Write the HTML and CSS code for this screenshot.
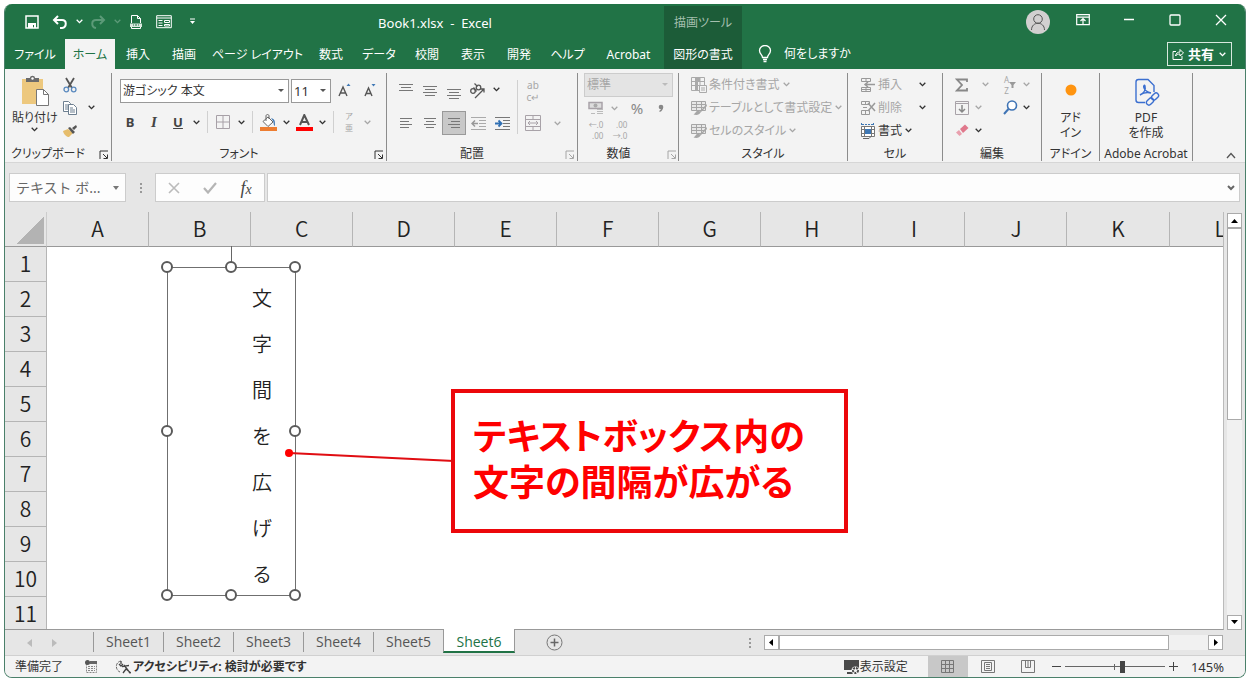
FILE: index.html
```html
<!DOCTYPE html>
<html lang="ja">
<head>
    <meta charset="UTF-8">
    <meta name="viewport" content="width=device-width, initial-scale=1.0">
    <title>Book1.xlsx - Excel</title>
    <link rel="stylesheet" href="styles.css">
</head>
<body>
    <svg class="defs" aria-hidden="true">
        <symbol id="chev" viewBox="0 0 8 8"><path d="M1.5 2.5 4 5l2.500-2.500" fill="none" stroke="currentColor" stroke-width="1.200"/></symbol>
        <symbol id="launch" viewBox="0 0 10 10"><path d="M1 9V1h8M4 4l4 4M8.500 4.500v4h-4" fill="none" stroke="currentColor"/></symbol>
        <symbol id="brushgrid" viewBox="0 0 16 16"><path d="M.5 1.500h14v9h-14zM.5 4.500h14M.5 7.500h14M5.500 1.500v9M10.500 1.500v9" fill="#e8e8e8" stroke="currentColor"/><path d="M15.500 4 9 11.500l-2-1.500c-2 1-2 3-4.500 4.500 3 .8 6 .5 7-2L16 6z" fill="currentColor"/></symbol>
    </svg>

    <div class="window">
        <header class="header">
            <div class="title-left">
                <div class="quick">
                    <button type="button" aria-label="保存"><svg width="14" height="14" viewBox="0 0 14 14"><path d="M1 1h12v12H1z" fill="none" stroke="#fff" stroke-width="1.500"/><path d="M3 8h8v5H9v-3H8v3H3z" fill="#fff"/></svg></button>
                    <button type="button" aria-label="元に戻す"><svg width="16" height="14" viewBox="0 0 16 14"><path d="M6 1 2 5l4 4M2 5h8c5 0 5 7 0 8H8" fill="none" stroke="#fff" stroke-width="2"/></svg></button>
                    <button type="button" class="drop" aria-label="元に戻す一覧"><svg width="9" height="9"><use href="#chev"/></svg></button>
                    <button type="button" class="faded" aria-label="やり直し"><svg width="16" height="14" viewBox="0 0 16 14"><path d="m10 1 4 4-4 4M14 5H6c-5 0-5 7 0 8" fill="none" stroke="currentColor" stroke-width="2"/></svg></button>
                    <button type="button" class="drop faded" aria-label="やり直し一覧"><svg width="9" height="9"><use href="#chev"/></svg></button>
                    <button type="button" aria-label="印刷プレビュー"><svg width="14" height="16" viewBox="0 0 14 16"><path d="M2.500 9V1.500h6l3 3V9M8.500 1.500v3h3M2.500 13v1.500h9V13" fill="none" stroke="#fff"/><path d="M1 9.500h12v3.500H1z" fill="#d8e8de"/><path d="M4 11h1M6 11h2M9 11h1" stroke="#217346"/></svg></button>
                    <button type="button" aria-label="フォーム"><svg width="16" height="14" viewBox="0 0 16 14"><path d="M.7.7h14.600v12H.7zM.7 3h14.600M2.500 5.500h4M2.500 8h4M2.500 10.500h4M8.500 5.500h5v2h-5zM8.500 9.500h5v1.500h-5z" fill="none" stroke="#fff"/></svg></button>
                    <button type="button" aria-label="カスタマイズ"><svg width="7" height="7" viewBox="0 0 7 7"><path d="M1 1h5" stroke="#fff"/><path d="M1 3h5L3.500 6z" fill="#fff"/></svg></button>
                </div>
                <h1 class="book-title">Book1.xlsx&nbsp; -&nbsp; Excel</h1>
            </div>
            <div class="context-title">描画ツール</div>
            <div class="title-right">
                <button type="button" class="avatar" aria-label="アカウント"><svg width="16" height="18" viewBox="0 0 16 18"><circle cx="8" cy="6" r="4.300"/><path d="M1.500 17c0-9 13-9 13 0"/></svg></button>
                <button type="button" class="win-btn" aria-label="リボンの表示オプション"><svg width="14" height="12" viewBox="0 0 14 12"><path d="M.7.7h12.600v10H.7zM.7 3.200h12.600M7 10V5M4.500 7 7 4.500 9.500 7" fill="none" stroke="#fff" stroke-width="1.200"/></svg></button>
                <button type="button" class="win-btn" aria-label="最小化"><svg width="12" height="12"><path d="M1 5.500h10" stroke="#fff" stroke-width="1.300"/></svg></button>
                <button type="button" class="win-btn" aria-label="最大化"><svg width="12" height="12"><rect x="1" y="1" width="10" height="10" rx="1" fill="none" stroke="#fff" stroke-width="1.300"/></svg></button>
                <button type="button" class="win-btn" aria-label="閉じる"><svg width="12" height="12"><path d="m1 1 10 10M11 1 1 11" stroke="#fff" stroke-width="1.300"/></svg></button>
            </div>
            <nav class="tabs">
                <a href="#">ファイル</a>
                <a href="#" class="active">ホーム</a>
                <a href="#">挿入</a>
                <a href="#">描画</a>
                <a href="#">ページ レイアウト</a>
                <a href="#">数式</a>
                <a href="#">データ</a>
                <a href="#">校閲</a>
                <a href="#">表示</a>
                <a href="#">開発</a>
                <a href="#">ヘルプ</a>
                <a href="#">Acrobat</a>
            </nav>
            <a href="#" class="context-tab">図形の書式</a>
            <div class="tabs-right">
                <button type="button" class="tell-me"><svg width="14" height="18" viewBox="0 0 14 18"><path d="M4.500 12.500c0-3-3-3.500-3-7a5.500 5 0 0 1 11 0c0 3.500-3 4-3 7zM5 14.500h4M5.500 16.500h3" fill="none" stroke="#fff" stroke-width="1.300"/></svg>何をしますか</button>
                <button type="button" class="share"><svg width="12" height="12" viewBox="0 0 12 12"><path d="M4 3.500H1v8h9V8M3.500 8C4 5 6 4 8 4V1.500L11.500 5 8 8V6C6 6 4.500 6.500 3.500 8z" fill="none" stroke="#fff"/></svg>共有<svg width="9" height="9"><use href="#chev"/></svg></button>
            </div>
        </header>

        <div class="ribbon">
            <section class="group">
                <div class="body clipboard">
                    <button type="button" class="big paste">
                        <svg width="28" height="32" viewBox="0 0 28 32"><path d="M1 4h21v25H1z" fill="#edc87e"/><path d="M5 3h4c0-3 5-3 5 0h4v4H5z" fill="#6b6b6b"/><circle cx="11.500" cy="3.500" r="1.200" fill="#fff"/><path d="M15.500 14.500h7l5 5v11h-12z" fill="#fff" stroke="#777"/><path d="M22.500 14.500v5h5" fill="none" stroke="#777"/></svg>
                        <span>貼り付け</span>
                        <svg width="9" height="9"><use href="#chev"/></svg>
                    </button>
                    <div class="stack">
                        <button type="button" aria-label="切り取り"><svg width="16" height="16" viewBox="0 0 16 16"><path d="m4 1 6 10M12 1 6 11" stroke="#555" stroke-width="1.800"/><circle cx="4.300" cy="12.500" r="2.300" fill="none" stroke="#5b8abf" stroke-width="1.300"/><circle cx="11.700" cy="12.500" r="2.300" fill="none" stroke="#5b8abf" stroke-width="1.300"/></svg></button>
                        <button type="button" aria-label="コピー"><svg width="16" height="16" viewBox="0 0 16 16"><path d="M1.500 1.500h5l2 2v8h-7zM3 5h4M3 7h4M3 9h4" fill="#fff" stroke="#6d7f90"/><path d="M6.500 4.500h5l3 3v7h-8zM8 8h3M8 10h5M8 12h5" fill="#fff" stroke="#6d7f90"/></svg></button>
                        <button type="button" aria-label="書式のコピー"><svg width="16" height="14" viewBox="0 0 16 14"><path d="m1 7 5-2 5 4-4 4c-2 0-5-2-6-6z" fill="#e6bd6c"/><path d="m6 4 2-1 5 5-2 2zM10 4l4-3 1 2-3 3z" fill="#555"/></svg></button>
                    </div>
                    <button type="button" class="drop" aria-label="コピーのオプション"><svg width="9" height="9"><use href="#chev"/></svg></button>
                </div>
                <footer class="has-launcher"><h2>クリップボード</h2><button type="button" class="launcher" aria-label="クリップボードの詳細"><svg width="10" height="10"><use href="#launch"/></svg></button></footer>
            </section>

            <section class="group">
                <div class="body font">
                    <div class="row">
                        <span class="combo font-name"><select aria-label="フォント名"><option>游ゴシック 本文</option></select></span>
                        <span class="combo font-size"><select aria-label="フォント サイズ"><option>11</option></select></span>
                        <button type="button" class="tool" aria-label="拡大"><svg width="16" height="16" viewBox="0 0 16 16"><path d="m2 13 4-9 4 9M3.500 10h5" fill="none" stroke="#555" stroke-width="1.400"/><path d="m9.500 3 2-2.500 2 2.500z" fill="#3f78b5"/></svg></button>
                        <button type="button" class="tool" aria-label="縮小"><svg width="16" height="16" viewBox="0 0 16 16"><path d="m2 13 3.500-8L9 13M3.500 10.500h4" fill="none" stroke="#555" stroke-width="1.400"/><path d="m8.500 1 2 2.500 2-2.500z" fill="#3f78b5"/></svg></button>
                    </div>
                    <div class="row">
                        <button type="button" class="tool bold">B</button>
                        <button type="button" class="tool italic">I</button>
                        <button type="button" class="tool underline">U</button>
                        <button type="button" class="drop" aria-label="下線"><svg width="9" height="9"><use href="#chev"/></svg></button>
                        <span class="sep"></span>
                        <button type="button" class="tool" aria-label="罫線"><svg width="14" height="14"><path d="M.5.5h13v13H.5zM7 .5v13M.5 7h13" fill="none" stroke="#a7a0a7"/></svg></button>
                        <button type="button" class="drop" aria-label="罫線の種類"><svg width="9" height="9"><use href="#chev"/></svg></button>
                        <span class="sep"></span>
                        <button type="button" class="tool" aria-label="塗りつぶしの色"><svg width="17" height="17" viewBox="0 0 17 17"><path d="M3 7.500 8 3l5 5-5 4.500z" fill="#fff" stroke="#666"/><path d="M6 7V2c0-2 3-2 3 0v3" fill="none" stroke="#666"/><path d="M11 4c4 1 4 3 4 8-2-1-1-4-2-5z" fill="#3f78b5"/><path d="M0 13h17v4H0z" fill="#ed7d31"/></svg></button>
                        <button type="button" class="drop" aria-label="塗りつぶしの一覧"><svg width="9" height="9"><use href="#chev"/></svg></button>
                        <button type="button" class="tool" aria-label="フォントの色"><svg width="17" height="17" viewBox="0 0 17 17"><path d="m4 11 4.300-10L13 11M5.500 8h6" fill="none" stroke="#555" stroke-width="2"/><path d="M0 13h17v4H0z" fill="#f00"/></svg></button>
                        <button type="button" class="drop" aria-label="フォントの色の一覧"><svg width="9" height="9"><use href="#chev"/></svg></button>
                        <span class="sep"></span>
                        <button type="button" class="tool ruby" disabled><span>ア</span><span>亜</span></button>
                        <button type="button" class="drop" disabled aria-label="ふりがな"><svg width="9" height="9"><use href="#chev"/></svg></button>
                    </div>
                </div>
                <footer class="has-launcher"><h2>フォント</h2><button type="button" class="launcher" aria-label="フォントの詳細"><svg width="10" height="10"><use href="#launch"/></svg></button></footer>
            </section>

            <section class="group">
                <div class="body align">
                    <div class="align-grid">
                        <button type="button" class="tool" aria-label="上揃え"><svg width="14" height="16"><path d="M0 1.500h14M2 4.500h10M0 7.500h14" stroke="#777"/></svg></button>
                        <button type="button" class="tool" aria-label="上下中央揃え"><svg width="14" height="16"><path d="M0 4.500h14M2 7.500h10M0 10.500h14M2 13.500h10" transform="translate(0 -1)" stroke="#777"/></svg></button>
                        <button type="button" class="tool" aria-label="下揃え"><svg width="14" height="16"><path d="M0 6.500h14M2 9.500h10M0 12.500h14M2 15.500h10" stroke="#777"/></svg></button>
                        <button type="button" class="tool" aria-label="方向"><svg width="18" height="18" viewBox="0 0 18 18"><g fill="none" stroke="#555" stroke-width="1.300"><circle cx="4" cy="9" r="2.300"/><path d="m4.500 5.500 3 4"/><circle cx="9.500" cy="5.500" r="2.300"/><path d="m5.500 1.500 3 3M6 16l9-9M11.500 7H15v3.500"/></g></svg></button>
                        <button type="button" class="drop" aria-label="方向の一覧"><svg width="9" height="9"><use href="#chev"/></svg></button>
                        <button type="button" class="tool" aria-label="左揃え"><svg width="12" height="12"><path d="M0 1.500h12M0 4.500h9M0 7.500h12M0 10.500h9" stroke="#777"/></svg></button>
                        <button type="button" class="tool" aria-label="中央揃え"><svg width="12" height="12"><path d="M0 1.500h12M2 4.500h8M0 7.500h12M2 10.500h8" stroke="#777"/></svg></button>
                        <button type="button" class="tool on" aria-label="右揃え"><svg width="12" height="12"><path d="M0 1.500h12M3 4.500h9M0 7.500h12M3 10.500h9" stroke="#777"/></svg></button>
                        <button type="button" class="tool" aria-label="インデントを減らす"><svg width="15" height="14"><path d="M0 1.500h15M8 4.500h7M8 7.500h7M8 10.500h7M0 13.500h15" stroke="#aaa"/><path d="M7 7.500H1M4 4.500l-3 3 3 3" fill="none" stroke="#999" stroke-width="1.500"/></svg></button>
                        <button type="button" class="tool" aria-label="インデントを増やす"><svg width="15" height="14"><path d="M0 1.500h15M8 4.500h7M8 7.500h7M8 10.500h7M0 13.500h15" stroke="#777"/><path d="M0 7.500h6M3.500 4.500l3 3-3 3" fill="none" stroke="#2f6fb3" stroke-width="1.800"/></svg></button>
                    </div>
                    <span class="sep tall"></span>
                    <div class="align-side">
                        <button type="button" class="tool wrap" disabled>ab<br>c↵</button>
                        <div class="row">
                            <button type="button" class="tool" disabled aria-label="セルを結合"><svg width="16" height="16"><path d="M.5.5h15v15H.5zM.5 4.500h15M.5 11.500h15M8 .5v4M8 11.500v4M3 8h10M5 6 3 8l2 2M11 6l2 2-2 2" fill="none" stroke="#a8a2a8"/></svg></button>
                            <button type="button" class="drop" disabled aria-label="結合の一覧"><svg width="9" height="9"><use href="#chev"/></svg></button>
                        </div>
                    </div>
                </div>
                <footer class="has-launcher"><h2>配置</h2><button type="button" class="launcher" disabled aria-label="配置の詳細"><svg width="10" height="10"><use href="#launch"/></svg></button></footer>
            </section>

            <section class="group">
                <div class="body number">
                    <span class="combo off"><select aria-label="表示形式" disabled><option>標準</option></select></span>
                    <div class="row">
                        <button type="button" class="tool" disabled aria-label="通貨"><svg width="16" height="15" viewBox="0 0 16 15"><path d="M1 1.500h13v6H1z" fill="#ddd" stroke="#a8a2a8" stroke-width="1.500"/><circle cx="7.500" cy="4.500" r="2" fill="#aaa"/><path d="M9 8.500h6M9 10.500h6M9 12.500h6M3 12.500h4" stroke="#bbb"/></svg></button>
                        <button type="button" class="drop" disabled aria-label="通貨の一覧"><svg width="9" height="9"><use href="#chev"/></svg></button>
                        <button type="button" class="tool percent" disabled>%</button>
                        <button type="button" class="tool comma" disabled aria-label="桁区切り"><svg width="6" height="9"><circle cx="3" cy="3" r="2.300" fill="#888"/><path d="M4.500 3c0 2-1 3.500-3 4.500" fill="none" stroke="#888" stroke-width="1.300"/></svg></button>
                    </div>
                    <div class="row">
                        <button type="button" class="tool digits" disabled>←.0<br>.00</button>
                        <button type="button" class="tool digits" disabled>.00<br>→.0</button>
                    </div>
                </div>
                <footer class="has-launcher"><h2>数値</h2><button type="button" class="launcher" disabled aria-label="数値の詳細"><svg width="10" height="10"><use href="#launch"/></svg></button></footer>
            </section>

            <section class="group">
                <div class="body lines">
                    <button type="button" class="line" disabled><svg width="16" height="16"><path d="M.5.5h13v13H.5zM.5 4.500h13M.5 8.500h13M4.500.5v13M9 .5v13" fill="none" stroke="#aaa"/><path d="M5 1h4v3H5zM5 5h2v8H5z" fill="#aaa"/><path d="M8.500 8.500h7v7h-7zM10 11h4M10 13h4" fill="#f3f3f3" stroke="#aaa"/></svg>条件付き書式<svg width="9" height="9"><use href="#chev"/></svg></button>
                    <button type="button" class="line" disabled><svg width="16" height="16"><use href="#brushgrid"/></svg>テーブルとして書式設定<svg width="9" height="9"><use href="#chev"/></svg></button>
                    <button type="button" class="line" disabled><svg width="16" height="16"><use href="#brushgrid"/></svg>セルのスタイル<svg width="9" height="9"><use href="#chev"/></svg></button>
                </div>
                <footer><h2>スタイル</h2></footer>
            </section>

            <section class="group">
                <div class="body lines">
                    <div class="row">
                        <button type="button" class="line" disabled><svg width="16" height="16"><path d="M1.500 1.500h9v3h-9zM6 1.500v3M1.500 10.500h9v4h-9zM6 10.500v4M1.500 12.500h9" fill="none" stroke="#999"/><path d="M15 7.500H5M8 5 5 7.500 8 10" fill="none" stroke="#999" stroke-width="1.500"/></svg>挿入</button>
                        <button type="button" class="drop far" aria-label="挿入の一覧"><svg width="9" height="9"><use href="#chev"/></svg></button>
                    </div>
                    <div class="row">
                        <button type="button" class="line" disabled><svg width="16" height="16"><path d="M1.500 1.500h8v3h-8zM5.500 1.500v3M1.500 10.500h8v4h-8zM5.500 10.500v4M3 7.500h4" fill="none" stroke="#999"/><path d="m8 3 7 8M15 3l-7 8" stroke="#999" stroke-width="1.500"/></svg>削除</button>
                        <button type="button" class="drop far" aria-label="削除の一覧"><svg width="9" height="9"><use href="#chev"/></svg></button>
                    </div>
                    <button type="button" class="line"><svg width="16" height="16"><path d="M1.500 0v3M13.500 0v3M2 1.500h12" stroke="#3f78b5" stroke-dasharray="2 1"/><path d="M1.500 3.500h13v10h-13zM1.500 6.500h13M1.500 10.500h13M4.500 3.500v10M11.500 3.500v10" fill="#fff" stroke="#777"/><path d="M5 6h6v5H5z" fill="#3f78b5"/><path d="M3 15.500h6l2-2" fill="none" stroke="#666"/></svg>書式<svg width="9" height="9"><use href="#chev"/></svg></button>
                </div>
                <footer><h2>セル</h2></footer>
            </section>

            <section class="group">
                <div class="body edit">
                    <div class="pair"><button type="button" class="tool" disabled aria-label="合計"><svg width="14" height="14"><path d="M12 4V1.500H2L7 7l-5 5.500h10V10" fill="none" stroke="#888" stroke-width="1.800"/></svg></button><button type="button" class="drop far-sum" disabled aria-label="合計の一覧"><svg width="9" height="9"><use href="#chev"/></svg></button></div>
                    <div class="pair"><button type="button" class="tool sort" disabled><span>A<br>Z</span><svg width="7" height="8"><path d="M0 1h7L4.500 4v3h-2V4z" fill="#999"/></svg></button><button type="button" class="drop" disabled aria-label="並べ替えの一覧"><svg width="9" height="9"><use href="#chev"/></svg></button></div>
                    <div class="pair"><button type="button" class="tool" disabled aria-label="フィル"><svg width="14" height="14"><path d="M.5.5h13v13H.5zM.5 2.500h13" fill="none" stroke="#a8a2a8"/><path d="M7 4v7M4 8l3 3 3-3" fill="none" stroke="#888" stroke-width="1.500"/></svg></button><button type="button" class="drop" disabled aria-label="フィルの一覧"><svg width="9" height="9"><use href="#chev"/></svg></button></div>
                    <div class="pair"><button type="button" class="tool" aria-label="検索と選択"><svg width="15" height="15"><circle cx="9" cy="5.500" r="4.500" fill="#fff" stroke="#3f74b5" stroke-width="1.600"/><path d="M5.500 9 1 14" stroke="#3f74b5" stroke-width="2"/></svg></button><button type="button" class="drop" aria-label="検索の一覧"><svg width="9" height="9"><use href="#chev"/></svg></button></div>
                    <div class="pair"><button type="button" class="tool" aria-label="クリア"><svg width="14" height="13"><path d="m5 5 5-4.500L13.500 4 8 9z" fill="#e0788c"/><path d="m4 6 3 4-2.500 2L1 8.500z" fill="#e9a0ae"/></svg></button><button type="button" class="drop" aria-label="クリアの一覧"><svg width="9" height="9"><use href="#chev"/></svg></button></div>
                </div>
                <footer><h2>編集</h2></footer>
            </section>

            <section class="group">
                <div class="body center">
                    <button type="button" class="big"><svg width="28" height="32"><circle cx="14" cy="15" r="5.500" fill="#ff9410"/></svg><span>アド<br>イン</span></button>
                </div>
                <footer><h2>アドイン</h2></footer>
            </section>

            <section class="group">
                <div class="body center">
                    <button type="button" class="big"><svg class="pdf" width="28" height="32" viewBox="0 0 28 32"><path d="M13 27.500H6.500c-2 0-2.500-1-2.500-2.500V7c0-2 1-2.500 2.500-2.500H16l6 6V17M8 20c4-2 6-5 5-9-.5-2-2 0-1 2 1 3 3 4 7 5-4-1-8 0-11 2z"/><rect x="19" y="19" width="8" height="5" rx="2.500" transform="rotate(-45 23 21.500)"/><rect x="14" y="24" width="8" height="5" rx="2.500" transform="rotate(-45 18 26.500)"/></svg><span>PDF<br>を作成</span></button>
                </div>
                <footer><h2>Adobe Acrobat</h2></footer>
            </section>
            <button type="button" class="collapse" aria-label="リボンを折りたたむ"><svg width="10" height="7"><path d="m1 6 4-4.500L9 6" fill="none" stroke="#555" stroke-width="1.300"/></svg></button>
        </div>

        <div class="formula-bar">
            <button type="button" class="name-box">テキスト ボ...<i class="tri"></i></button>
            <span class="dots"><i></i><i></i><i></i></span>
            <div class="fx-box">
                <button type="button" aria-label="キャンセル"><svg width="12" height="12"><path d="m1 1 10 10M11 1 1 11" stroke="#bbb" stroke-width="1.600"/></svg></button>
                <button type="button" aria-label="入力"><svg width="14" height="12"><path d="m1 6 4 4.500L13 1" fill="none" stroke="#b5b5b5" stroke-width="2.200"/></svg></button>
                <button type="button" class="fx">f<small>x</small></button>
            </div>
            <div class="formula">
                <input type="text" aria-label="数式バー">
                <svg width="12" height="12"><path d="m3 4 3 3 3-3" fill="none" stroke="#666" stroke-width="2"/></svg>
            </div>
        </div>

        <main class="workspace">
            <div class="sheet">
                <table>
                    <thead>
                        <tr><th class="corner"></th><th>A</th><th>B</th><th>C</th><th>D</th><th>E</th><th>F</th><th>G</th><th>H</th><th>I</th><th>J</th><th>K</th><th>L</th></tr>
                    </thead>
                    <tbody>
                        <tr><th>1</th><td colspan="12"></td></tr>
                        <tr><th>2</th><td colspan="12"></td></tr>
                        <tr><th>3</th><td colspan="12"></td></tr>
                        <tr><th>4</th><td colspan="12"></td></tr>
                        <tr><th>5</th><td colspan="12"></td></tr>
                        <tr><th>6</th><td colspan="12"></td></tr>
                        <tr><th>7</th><td colspan="12"></td></tr>
                        <tr><th>8</th><td colspan="12"></td></tr>
                        <tr><th>9</th><td colspan="12"></td></tr>
                        <tr><th>10</th><td colspan="12"></td></tr>
                        <tr><th>11</th><td colspan="12"></td></tr>
                    </tbody>
                </table>
                <!-- drawing layer: vertical text box, leader line, callout -->
                <div class="text-box">
                    <svg class="handles" width="140" height="360" viewBox="0 0 140 360">
                        <path d="M70.500 0v20" stroke="#666"/>
                        <rect x="6.500" y="21.500" width="128" height="328" fill="none" stroke="#bbb"/>
                        <rect x="6.500" y="21.500" width="128" height="328" fill="none" stroke="#222" stroke-dasharray="1 1"/>
                        <g fill="#fff" stroke="#5a5a5a" stroke-width="2">
                            <circle cx="6" cy="21" r="5"/><circle cx="70" cy="21" r="5"/><circle cx="134" cy="21" r="5"/>
                            <circle cx="6" cy="185" r="5"/><circle cx="134" cy="185" r="5"/>
                            <circle cx="6" cy="349" r="5"/><circle cx="70" cy="349" r="5"/><circle cx="134" cy="349" r="5"/>
                        </g>
                    </svg>
                    <p>文字間を広げる</p>
                </div>
                <div class="callout">テキストボックス内の<br>文字の間隔が広がる</div>
                <svg class="leader" width="176" height="20"><path d="M5 7 170 15" stroke="#e00d12" stroke-width="2"/><circle cx="5" cy="7" r="4" fill="#f00"/></svg>
            </div>
            <div class="vscroll">
                <button type="button" aria-label="上へ"><svg width="9" height="5"><path d="M1 5h7L4.500 1z"/></svg></button>
                <span class="thumb"></span>
                <button type="button" class="end" aria-label="下へ"><svg width="9" height="5"><path d="M1 0h7L4.500 4z"/></svg></button>
            </div>
        </main>

        <div class="sheet-bar">
            <div class="sheet-nav">
                <button type="button" aria-label="前へ"><svg width="5" height="8"><path d="M5 0v8L0 4z" fill="#bbb"/></svg></button>
                <button type="button" aria-label="次へ"><svg width="5" height="8"><path d="M0 0v8l5-4z" fill="#bbb"/></svg></button>
            </div>
            <nav class="sheet-tabs">
                <a href="#">Sheet1</a><a href="#">Sheet2</a><a href="#">Sheet3</a><a href="#">Sheet4</a><a href="#">Sheet5</a><a href="#" class="active">Sheet6</a>
            </nav>
            <button type="button" class="add-sheet" aria-label="新しいシート"><svg width="17" height="17"><circle cx="8.500" cy="8.500" r="7.500" fill="none" stroke="#777"/><path d="M8.500 4.500v8M4.500 8.500h8" stroke="#666" stroke-width="1.500"/></svg></button>
            <span class="dots"><i></i><i></i><i></i></span>
            <div class="hscroll">
                <button type="button" aria-label="左へ"><svg width="5" height="9"><path d="M4 1v7L0 4.500z"/></svg></button>
                <span class="thumb"></span>
                <button type="button" class="end" aria-label="右へ"><svg width="5" height="9"><path d="M1 1v7l4-3.500z"/></svg></button>
            </div>
        </div>

        <footer class="status">
            <span class="ready">準備完了</span>
            <button type="button" class="macro" aria-label="マクロの記録"><svg width="12" height="13"><path d="M1.500 3.500h10v9h-10zM3 6.500h7M3 8.500h7M3 10.500h7" fill="none" stroke="#888" stroke-dasharray="2 1"/><path d="M5 1h7v3H5z" fill="#666"/><circle cx="2.500" cy="2.500" r="2.500" fill="#555"/></svg></button>
            <button type="button" class="access"><svg width="16" height="14" viewBox="0 0 16 14"><path d="M6 1C0 2 0 10 5 12" fill="none" stroke="#666" stroke-dasharray="3 1"/><path d="M6 1v3M4 4l2 2 2-2M7 6.500c4 0 4-1 7-1M8 13l3-4 5 4M9 5l6 8" fill="none" stroke="#444" stroke-width="1.300"/></svg>アクセシビリティ: 検討が必要です</button>
            <button type="button" class="display"><svg width="16" height="16"><path d="M0 1h15v10H0zM3 13h6v2H3z" fill="#4a4a4a"/><circle cx="11.500" cy="11.500" r="4" fill="#f3f3f3"/><circle cx="11.500" cy="11.500" r="2.500" fill="none" stroke="#4a4a4a" stroke-width="2" stroke-dasharray="2 1"/></svg>表示設定</button>
            <div class="views">
                <button type="button" class="on" aria-label="標準"><svg width="13" height="13"><path d="M.5.5h12v12H.5zM4.500.5v12M8.500.5v12M.5 4.500h12M.5 8.500h12" fill="none" stroke="#777"/></svg></button>
                <button type="button" aria-label="ページ レイアウト表示"><svg width="14" height="13"><path d="M.5.500h13v12H.5zM3.500 2.500h7v8h-7zM5 4.500h4M5 6.500h4M5 8.500h4" fill="none" stroke="#777"/></svg></button>
                <button type="button" aria-label="改ページ プレビュー"><svg width="14" height="13"><path d="M.5.500h13v12H.5zM4.500.5v7h5v-7M7 .5v7" fill="none" stroke="#777"/></svg></button>
            </div>
            <div class="zoom">
                <button type="button" aria-label="縮小"><svg width="9" height="9"><path d="M0 4.500h9" stroke="#444"/></svg></button>
                <input type="range" min="0" max="100" value="58" aria-label="ズーム">
                <button type="button" aria-label="拡大"><svg width="9" height="9"><path d="M0 4.500h9M4.500 0v9" stroke="#444"/></svg></button>
                <output>145%</output>
            </div>
        </footer>
    </div>
</body>
</html>
```
FILE: styles.css
```css
* {
    margin: 0;
    padding: 0;
    box-sizing: border-box;
}

body {
    font-family: "Noto Sans", "Noto Sans CJK JP", sans-serif;
    font-size: 12px;
    line-height: 16px;
    font-feature-settings: "palt";
    color: #333;
    background-color: #fff;
}

button, input, select {
    font: inherit;
    font-feature-settings: inherit;
    color: inherit;
    background: none;
    border: none;
}

button {
    display: flex;
    align-items: center;
    justify-content: center;
    white-space: nowrap;
}

button:disabled, select:disabled {
    color: #a6a6a6;
    opacity: 1;
}

a {
    color: inherit;
    text-decoration: none;
}

svg {
    display: block;
    flex: none;
}

.defs {
    position: absolute;
    width: 0;
    height: 0;
}

.window {
    display: flex;
    flex-direction: column;
    height: calc(100vh - 9px);
    margin: 4px 4px 5px;
    border: 1px solid #4a806a;
    border-top: none;
    border-radius: 8px;
    background-color: #e6e6e6;
    overflow: hidden;
}

/* title bar and ribbon tabs */
.header {
    display: grid;
    grid-template-columns: auto 78px 1fr;
    grid-template-rows: 35px 30px;
    background-color: #217346;
    color: #fff;
}

.title-left {
    display: flex;
    align-items: center;
}

.quick {
    display: flex;
    align-items: center;
    padding-left: 13px;
}

.quick button {
    width: 28px;
    height: 28px;
}

.quick .drop {
    width: 10px;
}

.faded {
    color: #5c9a78;
}

.book-title {
    flex: 1;
    font-size: 13px;
    font-weight: normal;
    text-align: center;
    padding-top: 3px;
}

.context-title, .context-tab {
    display: flex;
    align-items: center;
    justify-content: center;
    background-color: #1c5c38;
}

.context-title {
    color: #a4bfae;
    margin-top: 2px;
}

.title-right {
    display: flex;
    justify-content: flex-end;
    align-items: center;
    padding-right: 1px;
}

.avatar {
    width: 24px;
    height: 24px;
    margin-right: 10px;
    border-radius: 50%;
    background-color: #d2d0d0;
}

.avatar svg {
    fill: none;
    stroke: #555;
}

.win-btn {
    width: 46px;
    height: 34px;
    padding-bottom: 3px;
}

.tabs {
    display: grid;
    grid-template-columns: 60px 50px 46px 46px 101px 46px 50px 46px 46px 46px 51px 71px;
}

.tabs a, .context-tab {
    display: flex;
    align-items: center;
    justify-content: center;
    padding-top: 2px;
    white-space: nowrap;
}

.tabs .active {
    background-color: #f3f3f3;
    color: #217346;
}

.tabs-right {
    display: flex;
    justify-content: space-between;
    align-items: center;
    padding: 0 13px 0 16px;
}

.tell-me {
    gap: 12px;
}

.share {
    gap: 4px;
    height: 24px;
    padding: 0 4px;
    border: 1px solid #d8e8de;
    font-size: 13px;
    font-weight: bold;
}

/* ribbon */
.ribbon {
    display: grid;
    grid-template-columns: 107px 275px 191px 101px 169px 95px 99px 58px 93px 1fr;
    height: 94px;
    padding: 4px 0 1px;
    background-color: #f3f3f3;
    border-bottom: 1px solid #d6d6d6;
}

.group {
    display: grid;
    grid-template-rows: 1fr 14px;
    border-right: 1px solid #8c8c8c;
    min-width: 0;
}

.group footer {
    display: flex;
    align-items: center;
    justify-content: center;
    position: relative;
}

.group .has-launcher {
    padding-right: 20px;
}

.group h2 {
    font-size: 12px;
    font-weight: normal;
    line-height: 14px;
    white-space: nowrap;
}

.launcher {
    position: absolute;
    right: 2px;
    top: 3px;
}

.row {
    display: flex;
    align-items: center;
}

.tool {
    width: 24px;
    height: 24px;
}

.drop {
    width: 12px;
    height: 20px;
}

.sep {
    width: 1px;
    height: 22px;
    margin: 0 3px 0 5px;
    background-color: #d0d0d0;
}

.clipboard {
    display: flex;
    padding-left: 7px;
}

.big {
    flex-direction: column;
    justify-content: flex-start;
    align-self: start;
    line-height: 15px;
    padding-top: 2px;
}

.big span {
    padding-top: 3px;
}

.stack {
    display: flex;
    flex-direction: column;
    width: 24px;
}

.stack button {
    height: 23px;
}

.clipboard .drop {
    height: 69px;
    margin-left: 4px;
}

.font {
    display: flex;
    flex-direction: column;
    gap: 7px;
    padding: 6px 0 0 6px;
}

.font .row:first-child {
    padding-left: 2px;
    gap: 2px;
}

.combo {
    position: relative;
    display: block;
    border: 1px solid #999;
    background-color: #fff;
}

.combo::after {
    content: "";
    position: absolute;
    right: 4px;
    top: 9px;
    border: 3px solid transparent;
    border-top-color: #555;
    border-bottom: none;
}

.combo select {
    display: block;
    width: 100%;
    height: 22px;
    padding-left: 2px;
    appearance: none;
}

.font-name {
    width: 169px;
}

.font-size {
    width: 40px;
}

.font-size select {
    font-size: 13px;
}

.combo.off {
    border-color: #ccc;
    background-color: #e4e4e4;
}

.combo.off::after {
    border-top-color: #bbb;
}

.bold, .italic, .underline {
    font-size: 13px;
    font-weight: bold;
    color: #444;
}

.italic {
    font-family: "Liberation Serif", serif;
    font-style: italic;
    font-size: 15px;
}

.underline {
    text-decoration: underline;
}

.ruby {
    flex-direction: column;
    font-size: 8px;
    line-height: 12px;
}

.align {
    display: flex;
    padding: 6px 0 0 7px;
}

.align-grid {
    display: grid;
    grid-template-columns: repeat(5, 24px);
    grid-template-rows: 24px 24px;
    row-gap: 8px;
}

.on {
    background-color: #c8c8c8;
    border: 1px solid #999;
}

.sep.tall {
    height: 54px;
    margin: 1px 3px 0;
}

.align-side {
    display: flex;
    flex-direction: column;
    gap: 8px;
}

.align-side .drop {
    margin-left: 6px;
}

.wrap {
    font-size: 10px;
    line-height: 12px;
}

.number {
    padding: 0 6px;
}

.number .tool {
    height: 22px;
}

.number .percent {
    font-size: 15px;
    margin-left: 5px;
    color: #888;
}

.digits {
    font-size: 8px;
    line-height: 11px;
    text-align: right;
}

.lines {
    display: flex;
    flex-direction: column;
    padding-left: 12px;
}

.line {
    height: 23px;
    gap: 2px;
    align-self: flex-start;
}

.lines .far {
    margin-left: 14px;
}

.edit {
    display: grid;
    grid-template-columns: 48px 1fr;
    grid-template-rows: repeat(3, 23px);
    padding-left: 7px;
}

.pair {
    display: flex;
    align-items: center;
}

.pair .drop {
    margin-left: -2px;
}

.pair .far-sum {
    margin-left: 5px;
}

.sort {
    font-size: 8px;
    line-height: 11px;
}

.center {
    display: flex;
    justify-content: center;
}

.pdf {
    fill: none;
    stroke: #3b6fd0;
    stroke-width: 1.4;
}

.collapse {
    align-self: end;
    justify-self: end;
    padding: 0 9px 2px 0;
}

/* formula bar */
.formula-bar {
    display: flex;
    height: 49px;
    padding: 10px 5px 10px 4px;
}

.name-box {
    width: 117px;
    justify-content: space-between;
    padding: 0 6px;
    border: 1px solid #ccc;
    background-color: #fdfdfd;
    font-size: 14px;
    font-feature-settings: normal;
    color: #666;
}

.tri {
    border: 3px solid transparent;
    border-top: 4px solid #777;
    border-bottom: none;
}

.dots {
    display: flex;
    flex-direction: column;
    align-items: center;
    justify-content: center;
    gap: 2px;
    width: 29px;
}

.dots i {
    width: 2px;
    height: 2px;
    background-color: #999;
}

.fx-box {
    display: flex;
    width: 110px;
    border: 1px solid #ccc;
    background-color: #fdfdfd;
}

.fx-box button {
    flex: 1;
}

.fx {
    font-family: "Liberation Serif", serif;
    font-size: 18px;
    font-style: italic;
    color: #444;
}

.fx small {
    font-size: 14px;
    padding-top: 4px;
}

.formula {
    display: flex;
    flex: 1;
    align-items: center;
    margin-left: 2px;
    border: 1px solid #ccc;
    background-color: #fdfdfd;
    padding-right: 2px;
}

.formula input {
    flex: 1;
    height: 100%;
}

/* grid */
.workspace {
    display: flex;
    flex: 1;
    min-height: 0;
}

.sheet {
    position: relative;
    flex: 1;
    overflow: hidden;
    border-right: 1px solid #bbb;
    border-bottom: 1px solid #999;
}

.sheet table {
    width: 104%;
    table-layout: fixed;
    border-collapse: separate;
    border-spacing: 0;
}

.sheet th {
    height: 35px;
    padding-bottom: 2px;
    background-color: #e6e6e6;
    border-right: 1px solid #b5b5b5;
    border-bottom: 1px solid #b5b5b5;
    font-family: "Noto Sans CJK JP", sans-serif;
    font-size: 21px;
    font-weight: 350;
    line-height: 24px;
    color: #222;
}

.sheet thead th {
    border-bottom-color: #999;
}

.sheet td {
    background-color: #fff;
}

.sheet .corner {
    width: 42px;
    border-right-color: #ccc;
    background-image: linear-gradient(135deg, transparent 50%, #b3b3b3 50%);
    background-size: 28px 28px;
    background-position: right 2px bottom 2px;
    background-repeat: no-repeat;
}

.text-box {
    position: absolute;
    left: 156px;
    top: 34px;
}

.text-box p {
    position: absolute;
    left: 91px;
    top: 29px;
    width: 20px;
    font-family: "Noto Sans CJK JP", sans-serif;
    font-feature-settings: normal;
    font-size: 20px;
    font-weight: 350;
    line-height: 46px;
    line-break: anywhere;
    color: #222;
}

.callout {
    position: absolute;
    left: 446px;
    top: 177px;
    width: 397px;
    height: 144px;
    padding: 18px;
    border: 4px solid #ec070b;
    background-color: #fff;
    font-family: "Noto Sans CJK JP", sans-serif;
    font-size: 36px;
    font-weight: bold;
    line-height: 46px;
    white-space: nowrap;
    color: #f00;
}

.leader {
    position: absolute;
    left: 279px;
    top: 234px;
}

.vscroll, .hscroll {
    display: flex;
    background-color: #f1f1f1;
}

.vscroll {
    flex-direction: column;
    width: 15px;
    margin: 1px 3px 0 3px;
}

.vscroll button, .hscroll button {
    width: 15px;
    height: 15px;
    border: 1px solid #aaa;
    background-color: #fff;
}

.thumb {
    border: 1px solid #aaa;
    background-color: #fff;
}

.vscroll .thumb {
    height: 46%;
}

.vscroll .end {
    margin-top: auto;
}

/* sheet tabs */
.sheet-bar {
    display: flex;
    height: 26px;
    border-bottom: 1px solid #d0d0d0;
}

.sheet-nav {
    display: flex;
    align-items: center;
    gap: 20px;
    width: 88px;
    padding-left: 22px;
}

.sheet-tabs {
    display: grid;
    grid-template-columns: repeat(5, 70px) 72px;
    font-family: "Open Sans", sans-serif;
    font-size: 14px;
    line-height: 20px;
    color: #555;
}

.sheet-tabs a {
    height: 20px;
    margin-top: 2px;
    border-left: 1px solid #999;
    text-align: center;
}

.sheet-tabs .active {
    position: relative;
    height: 24px;
    margin-top: -1px;
    padding-top: 3px;
    border-bottom: 2px solid #217346;
    border-right: 1px solid #999;
    background-color: #fff;
    color: #217346;
}

.add-sheet {
    margin-left: 31px;
}

.sheet-bar .dots {
    margin-left: auto;
}

.hscroll {
    flex-basis: 37%;
    height: 15px;
    margin: 5px 22px 0 0;
}

.hscroll .thumb {
    width: 85%;
}

.hscroll .end {
    margin-left: auto;
}

/* status bar */
.status {
    display: flex;
    align-items: stretch;
    height: 21px;
    padding-right: 21px;
    background-color: #f3f3f3;
    line-height: 22px;
}

.ready {
    padding-left: 10px;
}

.macro {
    margin-left: 22px;
}

.access {
    gap: 2px;
    margin-left: 18px;
    font-weight: bold;
}

.display {
    margin-left: auto;
}

.views {
    display: flex;
    margin-left: 20px;
}

.views button {
    width: 40px;
}

.views .on {
    border: none;
}

.zoom {
    display: flex;
    align-items: center;
    margin-left: 4px;
}

.zoom input {
    width: 100px;
    height: 12px;
    margin: 0 4px;
    appearance: none;
    background: linear-gradient(#666, #666) center / 100% 1px no-repeat, linear-gradient(#666, #666) center / 1px 6px no-repeat;
}

.zoom input::-webkit-slider-thumb {
    appearance: none;
    width: 5px;
    height: 12px;
    background-color: #444;
}

.zoom output {
    margin-left: 13px;
    font-size: 13px;
}
```
